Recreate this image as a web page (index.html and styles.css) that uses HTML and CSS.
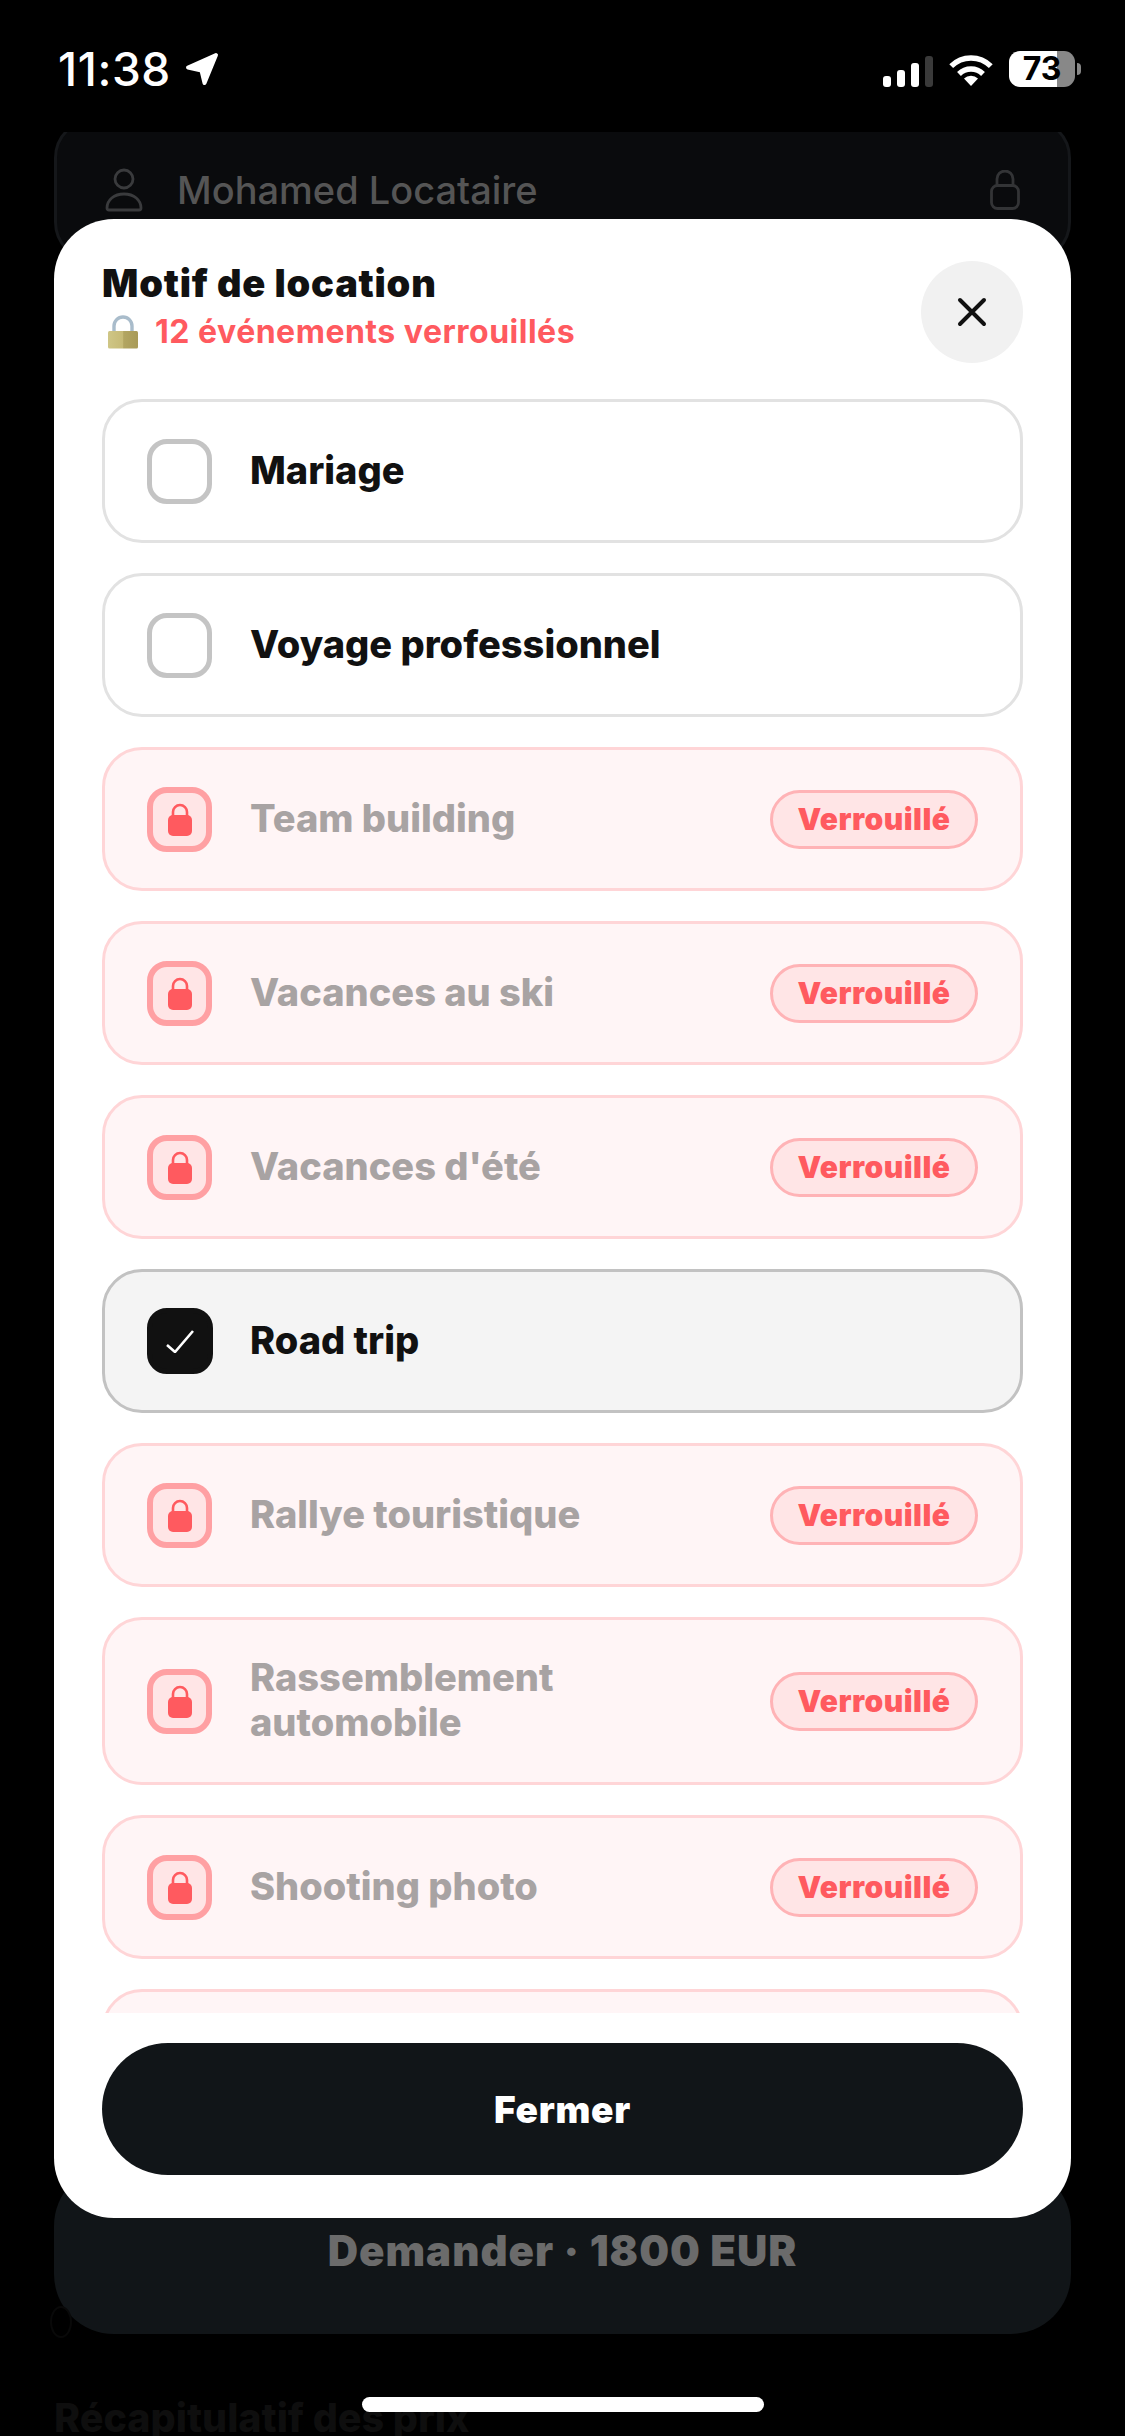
FILE: index.html
```html
<!DOCTYPE html>
<html lang="fr">
<head>
    <meta charset="UTF-8">
    <meta name="viewport" content="width=device-width, initial-scale=1.0">
    <title>Motif de location</title>
    <link rel="stylesheet" href="styles.css">
</head>
<body>
    <svg class="sprites" width="0" height="0">
        <symbol id="lock" viewBox="0 0 24 33">
            <path d="M5 13V9a7 7 0 0 1 14 0v4" fill="none" stroke="#ff5a5f" stroke-width="2.6"/>
            <rect x="0" y="12" width="24" height="21" rx="5" fill="#ff5a5f"/>
        </symbol>
        <linearGradient id="gold" x1="0" y1="0" x2="1" y2="0">
            <stop offset="0" stop-color="#cfc686"/>
            <stop offset="0.5" stop-color="#c6ba76"/>
            <stop offset="0.52" stop-color="#b3a662"/>
            <stop offset="1" stop-color="#a89a58"/>
        </linearGradient>
    </svg>

    <header class="status-bar">
        <div class="status-left">
            <span class="time">11:38</span>
            <svg class="arrow" width="34" height="34" viewBox="0 0 34 34">
                <path d="M31 3L3 15.5L16.5 18.5L19.5 31Z" fill="#fff" stroke="#fff" stroke-width="4" stroke-linejoin="round"/>
            </svg>
        </div>
        <div class="status-right">
            <div class="signal">
                <span class="bar bar-1"></span>
                <span class="bar bar-2"></span>
                <span class="bar bar-3"></span>
                <span class="bar bar-4"></span>
            </div>
            <svg class="wifi" width="44" height="32" viewBox="0 0 44 32">
                <path d="M2.2 12.2a28 28 0 0 1 39.6 0" fill="none" stroke="#fff" stroke-width="5.4"/>
                <path d="M10 20a17 17 0 0 1 24 0" fill="none" stroke="#fff" stroke-width="5.4"/>
                <path d="M22 32L15 24.6a10 10 0 0 1 14 0Z" fill="#fff"/>
            </svg>
            <div class="battery">
                <div class="battery-body">73</div>
                <span class="battery-nub"></span>
            </div>
        </div>
    </header>

    <main class="page">
        <div class="name-field">
            <svg width="40" height="44" viewBox="0 0 40 44" fill="none" stroke="#3a3b3d" stroke-width="2.8">
                <circle cx="20" cy="11" r="9"/>
                <path d="M3 40c0-8 7-14 17-14s17 6 17 14q0 2-2 2H5q-2 0-2-2Z"/>
            </svg>
            <span class="name-text">Mohamed Locataire</span>
            <svg class="name-lock" width="30" height="40" viewBox="0 0 30 40" fill="none" stroke="#333436" stroke-width="2.8">
                <path d="M7 16V9a8 8 0 0 1 16 0v7"/>
                <rect x="1.5" y="15.5" width="27" height="23" rx="6"/>
            </svg>
        </div>
        <div class="submit-wrap">
            <span class="ghost-ring"></span>
            <div class="submit-btn">Demander · 1800 EUR</div>
        </div>
        <h2 class="recap-title">Récapitulatif des prix</h2>
    </main>

    <section class="sheet">
        <div class="sheet-header">
            <div>
                <h1 class="sheet-title">Motif de location</h1>
                <div class="sheet-sub">
                    <svg width="30" height="34" viewBox="0 0 30 34">
                        <path d="M6 18V11a9 9 0 0 1 18 0v7" fill="none" stroke="#a9bccb" stroke-width="3.4"/>
                        <rect x="0" y="16" width="30" height="17.5" rx="1.5" fill="url(#gold)"/>
                    </svg>
                    <span>12 événements verrouillés</span>
                </div>
            </div>
            <button class="close-btn">
                <svg width="30" height="30" viewBox="0 0 30 30">
                    <path d="M3 3L27 27M27 3L3 27" stroke="#111" stroke-width="4" stroke-linecap="round"/>
                </svg>
            </button>
        </div>

        <div class="list">
            <div class="row">
                <span class="box"></span>
                <span class="label">Mariage</span>
            </div>
            <div class="row">
                <span class="box"></span>
                <span class="label">Voyage professionnel</span>
            </div>
            <div class="row locked">
                <span class="box"><svg width="24" height="33"><use href="#lock"/></svg></span>
                <span class="label">Team building</span>
                <span class="badge">Verrouillé</span>
            </div>
            <div class="row locked">
                <span class="box"><svg width="24" height="33"><use href="#lock"/></svg></span>
                <span class="label">Vacances au ski</span>
                <span class="badge">Verrouillé</span>
            </div>
            <div class="row locked">
                <span class="box"><svg width="24" height="33"><use href="#lock"/></svg></span>
                <span class="label">Vacances d'été</span>
                <span class="badge">Verrouillé</span>
            </div>
            <div class="row checked">
                <span class="box">
                    <svg width="28" height="23" viewBox="0 0 28 23">
                        <path d="M1 15L9 22L27 1" fill="none" stroke="#fff" stroke-width="2.6"/>
                    </svg>
                </span>
                <span class="label">Road trip</span>
            </div>
            <div class="row locked">
                <span class="box"><svg width="24" height="33"><use href="#lock"/></svg></span>
                <span class="label">Rallye touristique</span>
                <span class="badge">Verrouillé</span>
            </div>
            <div class="row locked">
                <span class="box"><svg width="24" height="33"><use href="#lock"/></svg></span>
                <span class="label">Rassemblement<br>automobile</span>
                <span class="badge">Verrouillé</span>
            </div>
            <div class="row locked">
                <span class="box"><svg width="24" height="33"><use href="#lock"/></svg></span>
                <span class="label">Shooting photo</span>
                <span class="badge">Verrouillé</span>
            </div>
            <div class="row locked">
                <span class="box"></span>
            </div>
        </div>

        <button class="close-action">Fermer</button>
    </section>

    <div class="home-indicator"></div>
</body>
</html>
```

FILE: styles.css
```css
* {
    box-sizing: border-box;
}
html, body {
    height: 2436px;
}
body {
    margin: 0;
    overflow: hidden;
    background: #000;
    font-family: Inter, "Noto Sans", sans-serif;
    color: #111;
}
.sprites {
    display: block;
    height: 0;
}

/* status bar */
.status-bar {
    position: relative;
    z-index: 1;
    height: 132px;
    padding: 51px 44px 0 58px;
    background: #000;
    display: flex;
    justify-content: space-between;
    align-items: flex-start;
}
.status-left {
    display: flex;
    align-items: center;
    gap: 14px;
    height: 36px;
}
.time {
    color: #fff;
    font-size: 46px;
    font-weight: 500;
    letter-spacing: 0.6px;
}
.status-right {
    display: flex;
    align-items: center;
    gap: 16px;
    height: 36px;
}
.signal {
    display: flex;
    align-items: flex-end;
    gap: 5.5px;
    height: 31px;
    margin-top: 4px;
}
.bar {
    width: 8.5px;
    border-radius: 3px;
    background: #fff;
}
.bar-1 { height: 11px; }
.bar-2 { height: 17px; }
.bar-3 { height: 24px; }
.bar-4 { height: 31px; background: #3a3a3a; }
.wifi {
    margin-top: 2px;
}
.battery {
    display: flex;
    align-items: center;
    gap: 2px;
}
.battery-body {
    width: 66px;
    height: 36px;
    border-radius: 11px;
    background: linear-gradient(to right, #fff 73%, #888 73%);
    color: #000;
    font-size: 32px;
    font-weight: 700;
    line-height: 36px;
    text-align: center;
}
.battery-nub {
    width: 4px;
    height: 12px;
    border-radius: 0 6px 6px 0;
    background: #888;
}

/* dimmed page behind the sheet */
.page {
    padding: 0 54px;
}
.name-field {
    height: 144px;
    margin-top: -14px;
    padding: 0 48px 0 47px;
    display: flex;
    align-items: center;
    gap: 33px;
    background: #0a0b0d;
    border: 3px solid #15171a;
    border-radius: 40px;
}
.name-text {
    color: #555;
    font-size: 38px;
    font-weight: 500;
}
.name-lock {
    margin-left: auto;
}
.submit-wrap {
    position: relative;
    margin-top: 1904px;
}
.submit-btn {
    height: 168px;
    display: flex;
    align-items: center;
    justify-content: center;
    background: #111518;
    border-radius: 60px;
    color: #6b6b6b;
    font-size: 42px;
    font-weight: 900;
    letter-spacing: 1px;
}
.ghost-ring {
    position: absolute;
    left: -4px;
    bottom: -4px;
    width: 22px;
    height: 32px;
    border: 2px solid #090909;
    border-radius: 50%;
}
.recap-title {
    margin: 60px 0 0;
    color: #0e0e0e;
    font-size: 39.5px;
    font-weight: 800;
    line-height: 48px;
}

/* bottom sheet */
.sheet {
    position: absolute;
    z-index: 2;
    left: 54px;
    top: 219px;
    width: 1017px;
    height: 1999px;
    padding: 42px 48px 43px;
    display: flex;
    flex-direction: column;
    background: #fff;
    border-radius: 60px;
}
.sheet-header {
    display: flex;
    justify-content: space-between;
    align-items: flex-start;
    margin-bottom: 36px;
}
.sheet-title {
    margin: 0 0 7px;
    font-size: 38px;
    font-weight: 900;
    letter-spacing: 0.8px;
    line-height: 44px;
}
.sheet-sub {
    display: flex;
    align-items: center;
    gap: 17px;
    margin-left: 6px;
    color: #ff5a5f;
    font-size: 32px;
    font-weight: 700;
    letter-spacing: 0.5px;
    line-height: 40px;
}
.close-btn {
    width: 102px;
    height: 102px;
    padding: 0;
    border: none;
    border-radius: 50%;
    background: #f1f1f1;
    display: flex;
    align-items: center;
    justify-content: center;
}
.list {
    flex: 1;
    min-height: 0;
    overflow: hidden;
    display: flex;
    flex-direction: column;
    gap: 30px;
}
.row {
    flex-shrink: 0;
    min-height: 144px;
    padding: 36px 42px;
    display: flex;
    align-items: center;
    gap: 38px;
    background: #fff;
    border: 3px solid #e2e2e2;
    border-radius: 40px;
}
.box {
    flex-shrink: 0;
    width: 65px;
    height: 65px;
    display: flex;
    align-items: center;
    justify-content: center;
    border: 5px solid #c4c4c4;
    border-radius: 20px;
}
.label {
    flex: 1;
    margin: -1px 0 1px;
    font-size: 38px;
    font-weight: 800;
    line-height: 45px;
}
.locked {
    background: #fff5f6;
    border-color: #ffd5d7;
}
.locked .box {
    background: #ffe5e6;
    border: 6px solid #ffa0a3;
}
.locked .label {
    color: #a8a3a3;
}
.checked {
    background: #f4f4f4;
    border-color: #c2c2c2;
}
.checked .box {
    width: 66px;
    height: 66px;
    margin-right: -1px;
    background: #111;
    border-color: #111;
}
.badge {
    flex-shrink: 0;
    width: 208px;
    height: 59px;
    display: flex;
    align-items: center;
    justify-content: center;
    background: #ffe5e6;
    border: 3px solid #ffb3b6;
    border-radius: 30px;
    color: #ff5a5f;
    font-size: 30px;
    font-weight: 900;
    letter-spacing: 0.5px;
}
.close-action {
    flex-shrink: 0;
    height: 132px;
    margin-top: 30px;
    border: none;
    border-radius: 66px;
    background: #111518;
    color: #fff;
    font-family: inherit;
    font-size: 37px;
    font-weight: 900;
    letter-spacing: 0.7px;
}
.home-indicator {
    position: absolute;
    z-index: 3;
    left: 362px;
    top: 2397px;
    width: 402px;
    height: 15px;
    border-radius: 8px;
    background: #fff;
}
```
